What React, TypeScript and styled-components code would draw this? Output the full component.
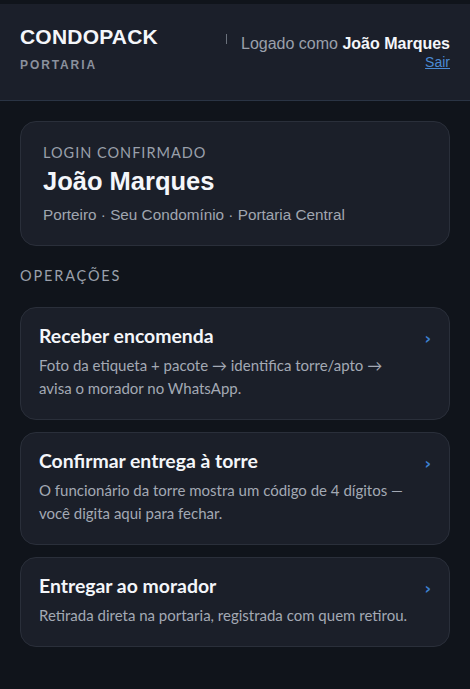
import React from "react";
import styled, { createGlobalStyle } from "styled-components";

const Global = createGlobalStyle`
  html, body { margin: 0; padding: 0; background: #10141b; }
  body { font-family: "Liberation Sans", Arial, sans-serif; color: #f2f4f7; }
  * { box-sizing: border-box; }
`;

const Page = styled.div`
  min-height: 689px;
  background: #10141b;
  padding-top: 4px;
`;

const Header = styled.header`
  display: flex;
  justify-content: space-between;
  align-items: flex-start;
  background: #1b1f2a;
  border-bottom: 1px solid #2a3444;
  padding: 22px 20px 0 20px;
  height: 97px;
`;

const Brand = styled.div`
  display: flex;
  flex-direction: column;
`;

const Logo = styled.div`
  font-family: "Liberation Sans", Arial, sans-serif;
  font-weight: 900;
  font-size: 21px;
  letter-spacing: 0.2px;
  line-height: 22px;
  color: #f4f6fa;
`;

const Sub = styled.div`
  margin-top: 10px;
  font-family: "Liberation Sans", Arial, sans-serif;
  font-weight: 700;
  font-size: 12px;
  line-height: 14px;
  letter-spacing: 1.9px;
  color: #8b919d;
`;

const UserBox = styled.div`
  display: flex;
  align-items: flex-start;
  padding-top: 8px;
`;

const Tick = styled.span`
  width: 1px;
  height: 10px;
  margin-right: 14px;
  background: #6b717c;
`;

const UserText = styled.div`
  display: flex;
  flex-direction: column;
  align-items: flex-end;
`;

const Logged = styled.div`
  font-size: 16px;
  line-height: 20px;
  color: #9aa0ab;
  b { color: #f4f6fa; font-weight: 700; }
`;

const Sair = styled.a`
  font-size: 14px;
  line-height: 16px;
  color: #4a8ad4;
  text-decoration: underline;
`;

const Main = styled.main`
  padding: 20px 20px;
  display: flex;
  flex-direction: column;
`;

const LoginCard = styled.section`
  background: #1b1f29;
  border: 1px solid #2a2f3a;
  border-radius: 16px;
  padding: 22px 22px 20px 22px;
`;

const Kicker = styled.div`
  font-family: "Lato", "Liberation Sans", sans-serif;
  font-size: 14.5px;
  letter-spacing: 1px;
  color: #9aa0ab;
  line-height: 18px;
`;

const Name = styled.h1`
  margin: 2px 0 0 0;
  font-family: "Liberation Sans", Arial, sans-serif;
  font-size: 25.5px;
  font-weight: 700;
  line-height: 34px;
  color: #f4f6fa;
`;

const Meta = styled.div`
  margin-top: 7px;
  font-size: 15.3px;
  line-height: 20px;
  color: #a0a6b0;
`;

const Section = styled.div`
  margin-top: 21px;
  margin-bottom: 22px;
  font-family: "Lato", "Liberation Sans", sans-serif;
  font-size: 14.5px;
  line-height: 18px;
  letter-spacing: 1.85px;
  color: #9aa0ab;
`;

const OpList = styled.div`
  display: flex;
  flex-direction: column;
  gap: 12px;
`;

const OpCard = styled.a`
  display: flex;
  align-items: flex-start;
  justify-content: space-between;
  background: #1b1f29;
  border: 1px solid #2a2f3a;
  border-radius: 16px;
  padding: 16px 18px 19px 18px;
  text-decoration: none;
`;

const OpBody = styled.div`
  display: flex;
  flex-direction: column;
  max-width: 372px;
`;

const OpTitle = styled.div`
  font-family: "Lato", "Liberation Sans", sans-serif;
  font-weight: 700;
  font-size: 19.4px;
  line-height: 24px;
  color: #f4f6fa;
`;

const OpDesc = styled.div`
  margin-top: 6px;
  font-family: "Lato", "Liberation Sans", sans-serif;
  font-size: 15px;
  line-height: 23px;
  color: #a3a9b4;
`;

const Chevron = styled.span`
  margin-top: 5px;
  font-family: "DejaVu Sans", sans-serif;
  font-size: 16px;
  line-height: 20px;
  font-weight: 700;
  color: #3d7fd0;
`;

const ops = [
  {
    title: "Receber encomenda",
    desc: "Foto da etiqueta + pacote → identifica torre/apto → avisa o morador no WhatsApp.",
  },
  {
    title: "Confirmar entrega à torre",
    desc: "O funcionário da torre mostra um código de 4 dígitos — você digita aqui para fechar.",
  },
  {
    title: "Entregar ao morador",
    desc: "Retirada direta na portaria, registrada com quem retirou.",
  },
];

export default function App() {
  return (
    <Page>
      <Global />
      <Header>
        <Brand>
          <Logo>CONDOPACK</Logo>
          <Sub>PORTARIA</Sub>
        </Brand>
        <UserBox>
          <Tick />
          <UserText>
            <Logged>
              Logado como <b>João Marques</b>
            </Logged>
            <Sair href="#">Sair</Sair>
          </UserText>
        </UserBox>
      </Header>
      <Main>
        <LoginCard>
          <Kicker>LOGIN CONFIRMADO</Kicker>
          <Name>João Marques</Name>
          <Meta>Porteiro · Seu Condomínio · Portaria Central</Meta>
        </LoginCard>
        <Section>OPERAÇÕES</Section>
        <OpList>
          {ops.map((o) => (
            <OpCard href="#" key={o.title}>
              <OpBody>
                <OpTitle>{o.title}</OpTitle>
                <OpDesc>{o.desc}</OpDesc>
              </OpBody>
              <Chevron>›</Chevron>
            </OpCard>
          ))}
        </OpList>
      </Main>
    </Page>
  );
}
